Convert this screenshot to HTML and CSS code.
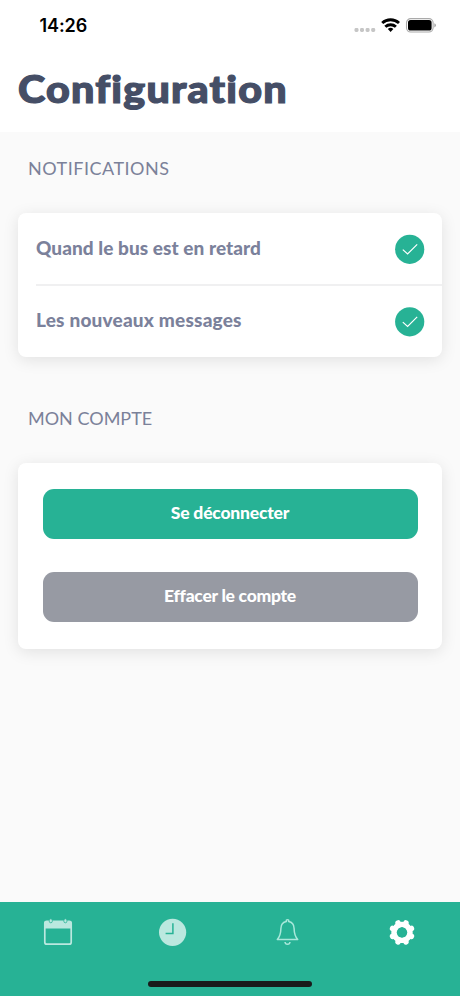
FILE: index.html
```html
<!DOCTYPE html>
<html lang="fr">
<head>
<meta charset="utf-8">
<title>Configuration</title>
<link rel="stylesheet" href="styles.css">
</head>
<body>
<div class="screen">
  <header class="header">
    <div class="status">
      <span class="time">14:26</span>
      <svg class="indicators" width="84" height="20" viewBox="0 0 84 20">
        <g fill="#c6c6c6"><rect x="0.5" y="13" width="4" height="4" rx="1.4"/><rect x="6" y="13" width="4" height="4" rx="1.4"/><rect x="11.6" y="13" width="4" height="4" rx="1.4"/><rect x="17.2" y="13" width="4" height="4" rx="1.4"/></g>
        <g fill="none" stroke="#000" stroke-width="2.9"><path d="M28.2 8a12.3 12.3 0 0 1 16.8 0"/><path d="M31.3 11.8a7.8 7.8 0 0 1 10.6 0"/></g>
        <path d="M33.8 14a4.2 4.2 0 0 1 5.6 0l-2.8 2.9z" fill="#000"/>
        <rect x="52.5" y="3.6" width="26.6" height="13.4" rx="4.2" fill="none" stroke="#aaa" stroke-width="1.1"/>
        <rect x="54" y="5.1" width="23.6" height="10.4" rx="2.6" fill="#000"/>
        <path d="M80.3 8.2q1.7.6 1.7 2.1t-1.7 2.1z" fill="#aaa"/>
      </svg>
    </div>
    <h1 class="title">Configuration</h1>
  </header>
  <main class="content">
    <h2 class="section">NOTIFICATIONS</h2>
    <div class="card">
      <div class="row">
        <span class="late">Quand le bus est en retard</span>
        <svg width="30" height="30" viewBox="0 0 30 30"><circle cx="14.7" cy="15.3" r="14.6" fill="#27b295"/><path d="M7.8 15.6l4.8 4.4 9.6-9.6" fill="none" stroke="#fff" stroke-width="1.2"/></svg>
      </div>
      <div class="row">
        <span class="messages">Les nouveaux messages</span>
        <svg width="30" height="30" viewBox="0 0 30 30"><circle cx="14.7" cy="14.8" r="14.6" fill="#27b295"/><path d="M7.8 15.1l4.8 4.4 9.6-9.6" fill="none" stroke="#fff" stroke-width="1.2"/></svg>
      </div>
    </div>
    <h2 class="section account">MON COMPTE</h2>
    <div class="card actions">
      <button class="button logout">Se déconnecter</button>
      <button class="button delete">Effacer le compte</button>
    </div>
  </main>
  <nav class="tabs">
    <div class="icons">
      <svg width="30" height="30" viewBox="0 0 30 30"><rect x="1.8" y="4.4" width="26.4" height="22.8" rx="2" fill="none" stroke="#bbe8df" stroke-width="1.7"/><path d="M1.2 11.4V6.2q0-2.2 2.2-2.2h23.2q2.2 0 2.2 2.2v5.2z" fill="#bbe8df"/><g fill="#bbe8df" stroke="#27b295" stroke-width="0.8"><rect x="6.3" y="1.8" width="3" height="4" rx="1.5"/><rect x="20.9" y="1.8" width="3" height="4" rx="1.5"/></g></svg>
      <svg width="30" height="30" viewBox="0 0 30 30"><circle cx="14.6" cy="15.3" r="13.6" fill="#bbe8df"/><path d="M14.9 6.3v10.3H7.6" fill="none" stroke="#27b295" stroke-width="1.5"/></svg>
      <svg width="30" height="30" viewBox="0 0 30 30" fill="none" stroke="#a9e8db" stroke-width="1.5" stroke-linejoin="round"><path d="M14.4 4.6q-.6-1.9 1.1-1.9t1.1 1.9c3.8.6 5.4 3.1 5.5 6.9.1 5.8.8 7.8 3.6 11H5.3c2.8-3.2 3.5-5.2 3.6-11 .1-3.8 1.7-6.3 5.5-6.9z"/><path d="M13 25c.3 3 4.7 3 5 0"/></svg>
      <svg width="30" height="30" viewBox="0 0 30 30"><g transform="translate(0 .4)"><circle cx="15" cy="15" r="8" fill="none" stroke="#fff" stroke-width="5.4"/><g stroke="#fff" stroke-width="5.6" stroke-linecap="round"><path d="M18.1 7.6L18.9 5.6M22.4 11.9l2-.8M22.4 18.1l2 .8M18.1 22.4l.8 2M11.9 22.4l-.8 2M7.6 18.1l-2 .8M7.6 11.9l-2-.8M11.9 7.6L11.1 5.6"/></g></g></svg>
    </div>
    <div class="home"></div>
  </nav>
</div>
</body>
</html>
```
FILE: styles.css
```css
* { box-sizing: border-box; }
body { margin: 0; font-family: Lato, "Liberation Sans", sans-serif; }
.screen { width: 460px; height: 996px; display: flex; flex-direction: column; background: #fafafa; }
.header { height: 132px; background: #fff; }
.status { display: flex; justify-content: space-between; padding: 15px 22px 0 39.5px; height: 52px; }
.time { font: 600 18px/22px Inter, sans-serif; color: #000; letter-spacing: -0.1px; }
.title { width: fit-content; margin: 10px 0 0 18px; font-size: 37.5px; line-height: 54px; font-weight: 900; letter-spacing: 1.1px; color: #454e66; white-space: nowrap; -webkit-text-stroke: 1.2px #454e66; transform: scaleX(1.1); transform-origin: left; }
.content { flex: 1; padding: 0 18px; }
.section { margin: 0 0 0 10px; padding-top: 24px; height: 81px; font-size: 18px; line-height: 24px; font-weight: 400; letter-spacing: 0.5px; color: #7b8199; }
.card { background: #fff; border-radius: 8px; box-shadow: 0 3px 16px rgba(0, 0, 0, 0.1); }
.row { height: 72px; margin-left: 18px; padding-right: 17px; display: flex; align-items: center; justify-content: space-between; font-size: 19px; line-height: 24px; font-weight: 900; color: #7b819b; }
.row + .row { border-top: 2px solid #f0f0f1; margin-top: -1px; height: 73px; }
.row span { padding-bottom: 2px; }
.late { letter-spacing: 0.06px; }
.row .messages { letter-spacing: 0.2px; padding-bottom: 3px; }
.account { height: 106px; padding-top: 49px; letter-spacing: 0; }
.actions { height: 186px; padding: 26px 24.5px 0; display: flex; flex-direction: column; gap: 33px; }
.button { height: 50px; border: 0; border-radius: 11px; padding: 0 0 2px; font: 900 17.5px/22px Lato, sans-serif; color: #fff; }
.logout { background: #27b295; letter-spacing: -0.2px; }
.delete { background: #979aa3; letter-spacing: -0.26px; }
.tabs { height: 94px; background: #27b295; display: flex; flex-direction: column; justify-content: space-between; align-items: center; padding: 15px 0 9px; }
.icons { width: 374px; display: flex; justify-content: space-between; }
.home { width: 164px; height: 6px; border-radius: 3px; background: #191b1b; }
```
